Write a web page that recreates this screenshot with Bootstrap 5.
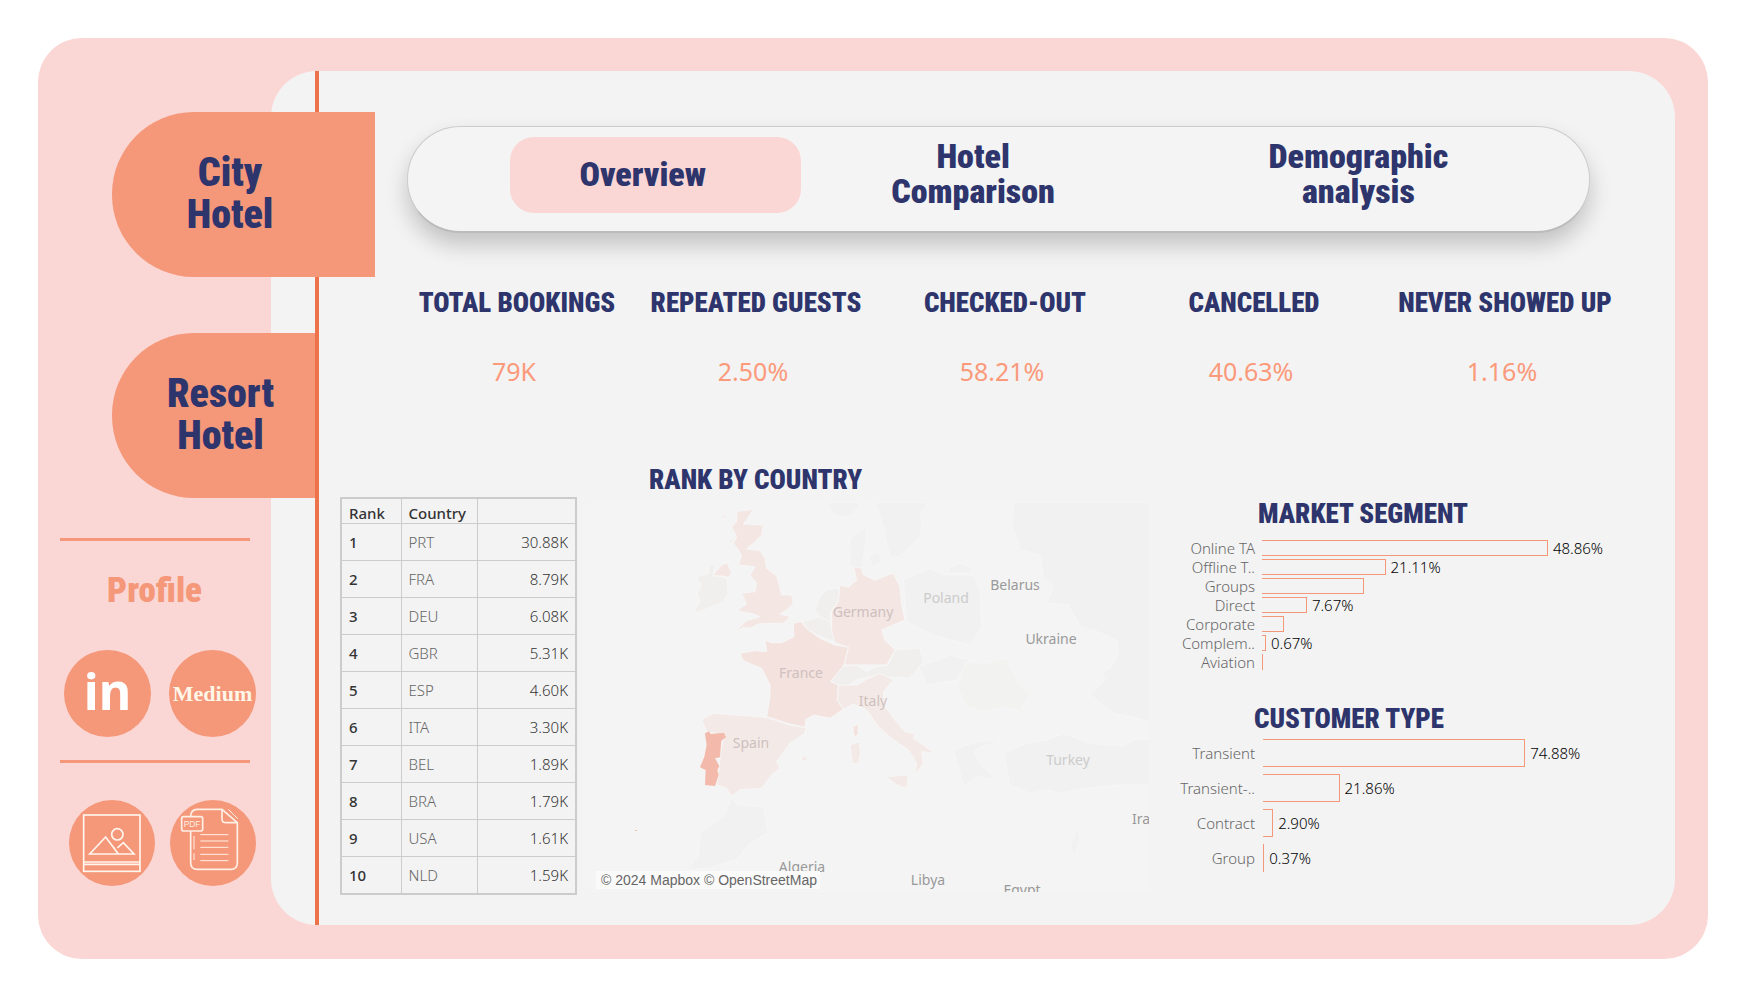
<!DOCTYPE html>
<html lang="en">
<head>
<meta charset="utf-8">
<meta name="viewport" content="width=device-width, initial-scale=1">
<title>Hotel bookings overview</title>
<link href="https://cdn.jsdelivr.net/npm/bootstrap@5.3.0/dist/css/bootstrap.min.css" rel="stylesheet">
<style>
:root{--pink:#fad7d4;--salmon:#f59779;--navy:#2e346c;--panel:#f3f3f3;--rule:#ee734a}
body{background:#fff;font-family:"Noto Sans","Open Sans",sans-serif;color:#333}
.display-face{font-family:"Roboto Condensed",Roboto,Lato,sans-serif;font-weight:900;color:var(--navy)}
.shell{background:var(--pink);border-radius:44px;margin:38px 41px 41px 38px;padding:33px 33px 34px 0}
.side{width:233px;flex:none;z-index:1;padding-top:41px}
.tab-btn{display:block;height:165px;border:0;background:var(--salmon);border-radius:82px 0 0 82px;margin-left:74px;font-size:40px;line-height:42px;padding:0 0 2px}
.tab-city{width:263px;padding-right:27px}
.tab-resort{width:203px;padding-left:14px;margin-top:56px}
.side-rule{border:0;border-top:3px solid var(--salmon);opacity:1;width:190px;margin:0 0 0 22px}
.profile-title{color:var(--salmon);font-size:35px;line-height:40px}
.disc{width:87px;height:87px;border-radius:50%;background:var(--salmon);color:#fff;text-decoration:none;flex:none}
.disc-in{font-size:50px;line-height:50px;font-weight:700;padding-bottom:6px}
.disc-medium{font:700 22px/24px "Liberation Serif",serif;color:#fff6e8}
.disc-sm{width:86px;height:86px}
.panel{background:var(--panel);border-radius:46px;min-width:0}
.rail{width:48px;flex:none;border-right:4px solid var(--rule)}
.top-nav{margin:55px 85px 0 88px;padding:10px 17px 18px 102px;border-radius:53px;display:grid;grid-template-columns:292fr 344fr 428fr;align-items:center;background:#f4f4f4;border:1px solid #ccc;border-bottom:2px solid #bbb;box-shadow:0 12px 22px rgba(0,0,0,.2)}
.top-nav button{border:0;background:none;font-size:34px;line-height:35px;height:76px;padding:0 0 2px}
.top-nav .current{background:var(--pink);border-radius:24px;padding-right:26px}
.kpis{display:grid;grid-template-columns:minmax(0,250fr) minmax(0,228fr) minmax(0,270fr) minmax(0,228fr) minmax(0,274fr);margin:54px 33px 0 73px;text-align:center}
.title-face{font-size:27px;line-height:32px;margin:0;white-space:nowrap}
.kpi-num{color:#fb9a7b;font-size:25px;line-height:32px;margin:36px 6px 0 0}
.lower{display:grid;grid-template-columns:237px minmax(0,572fr) minmax(0,481fr);margin:77px 45px 30px 21px}
.rank-table{width:237px;margin-top:33px;border-collapse:collapse;border:2px solid #ccc;font-size:15px;line-height:20px;table-layout:fixed}
.rank-table th,.rank-table td{border:1px solid #ccc;padding:0 7px;height:37px}
.rank-table thead th{height:25px;font-weight:500;padding-top:4px}
.rank-table tbody th{font-weight:500;color:#333}
.rank-table .c-name{font-weight:300;color:#666}
.rank-table .c-val{font-weight:300;text-align:right;color:#333}
.map-col{margin-left:14px}
.map-title{margin-left:58px}
.map-box{margin-top:6px}
.map-box svg{display:block;width:100%}
.map-box text{font-size:14px;text-anchor:middle;fill:#999}
.map-box .dim{fill:#ccc}
.map-box .warm{fill:#cfc0be}
.credit{position:absolute;left:5px;bottom:3px;background:#fafafa;font:14px/18px "Liberation Sans",sans-serif;color:#666;padding:0 3px 0 5px;white-space:nowrap}
.chart-title{margin-left:109px}
.bars{display:grid;font-size:15px}
.bar-line{display:grid;grid-template-columns:106px minmax(0,1fr);column-gap:7px;align-items:center}
.bar-name{text-align:right;font-weight:300;color:#666;white-space:nowrap}
.bar-plot{display:flex;align-items:center}
.bar-fill{border:1px solid var(--salmon);border-left:0;flex:none;width:calc(var(--v) * var(--unit))}
.bar-val{margin-left:5px;font-weight:300;color:#000;white-space:nowrap}
.market{--unit:1.59%;margin-top:10px;row-gap:3px}
.market .bar-line{height:16px}
.market .bar-name,.market .bar-val{line-height:16px}
.market .bar-fill{height:16px}
.customer{--unit:.954%;margin-top:4px;row-gap:7px}
.customer .bar-line,.customer .bar-fill{height:28px}
.customer .bar-line{column-gap:8px}
.customer-title{margin-top:33px;margin-left:105px}
</style>
</head>
<body>
<div class="shell d-flex">
  <aside class="side position-relative">
    <button class="tab-btn tab-city display-face" type="button">City<br>Hotel</button>
    <button class="tab-btn tab-resort display-face" type="button">Resort<br>Hotel</button>
    <hr class="side-rule" style="margin-top:40px">
    <h2 class="profile-title display-face text-center mb-0" style="margin-top:30px">Profile</h2>
    <div class="d-flex" style="margin:39px 0 0 26px;gap:18px">
      <a href="#" class="disc disc-in d-flex align-items-center justify-content-center" aria-label="LinkedIn">in</a>
      <a href="#" class="disc disc-medium d-flex align-items-center justify-content-center">Medium</a>
    </div>
    <hr class="side-rule" style="margin-top:23px">
    <div class="d-flex" style="margin:37px 0 0 31px;gap:15px">
      <a href="#" class="disc disc-sm" aria-label="Download image">
        <svg class="d-block" viewBox="0 0 258 258" width="86" height="86" fill="none" stroke="#fff6ee" stroke-width="5"><rect x="44" y="45" width="169" height="169"/><path d="M44 186h169M44 193h169M62 162l48-51 38 51zM134 142l13 20h48l-32-34-18 16M62 162h135"/><circle cx="145" cy="103" r="17"/></svg>
      </a>
      <a href="#" class="disc disc-sm" aria-label="Download PDF">
        <svg class="d-block" viewBox="0 0 258 258" width="86" height="86" fill="none" stroke="#fff0e6" stroke-width="5"><path d="M62 50q0-22 20-22h74l46 40v120q0 20-20 20H82q-20 0-20-20V94M156 28v28q0 12 12 12h34"/><rect x="35" y="50" width="63" height="43" rx="6"/><path stroke-width="3" d="M91 104h84M91 123h84M91 142h84M91 163h84M91 182h84M72 108v40M72 160v20M175 28l28 28"/><text x="66" y="80" font-size="25" text-anchor="middle" fill="#fff0e6" stroke="none" font-family="Liberation Sans">PDF</text></svg>
      </a>
    </div>
  </aside>
  <main class="panel d-flex flex-grow-1">
    <div class="rail"></div>
    <div class="flex-grow-1" style="min-width:0">
      <nav class="top-nav" aria-label="Pages">
        <button type="button" class="current display-face">Overview</button>
        <button type="button" class="display-face">Hotel<br>Comparison</button>
        <button type="button" class="display-face">Demographic<br>analysis</button>
      </nav>
      <section class="kpis">
        <div><h2 class="title-face display-face">TOTAL BOOKINGS</h2><p class="kpi-num">79K</p></div>
        <div><h2 class="title-face display-face">REPEATED GUESTS</h2><p class="kpi-num">2.50%</p></div>
        <div><h2 class="title-face display-face">CHECKED-OUT</h2><p class="kpi-num">58.21%</p></div>
        <div><h2 class="title-face display-face">CANCELLED</h2><p class="kpi-num">40.63%</p></div>
        <div><h2 class="title-face display-face">NEVER SHOWED UP</h2><p class="kpi-num">1.16%</p></div>
      </section>
      <section class="lower">
        <div>
          <table class="rank-table">
            <colgroup><col style="width:60px"><col style="width:76px"><col></colgroup>
            <thead><tr><th scope="col">Rank</th><th scope="col">Country</th><th></th></tr></thead>
            <tbody>
              <tr><th scope="row">1</th><td class="c-name">PRT</td><td class="c-val">30.88K</td></tr>
              <tr><th scope="row">2</th><td class="c-name">FRA</td><td class="c-val">8.79K</td></tr>
              <tr><th scope="row">3</th><td class="c-name">DEU</td><td class="c-val">6.08K</td></tr>
              <tr><th scope="row">4</th><td class="c-name">GBR</td><td class="c-val">5.31K</td></tr>
              <tr><th scope="row">5</th><td class="c-name">ESP</td><td class="c-val">4.60K</td></tr>
              <tr><th scope="row">6</th><td class="c-name">ITA</td><td class="c-val">3.30K</td></tr>
              <tr><th scope="row">7</th><td class="c-name">BEL</td><td class="c-val">1.89K</td></tr>
              <tr><th scope="row">8</th><td class="c-name">BRA</td><td class="c-val">1.79K</td></tr>
              <tr><th scope="row">9</th><td class="c-name">USA</td><td class="c-val">1.61K</td></tr>
              <tr><th scope="row">10</th><td class="c-name">NLD</td><td class="c-val">1.59K</td></tr>
            </tbody>
          </table>
        </div>
        <div class="map-col">
          <h2 class="title-face display-face map-title">RANK BY COUNTRY</h2>
          <div class="map-box position-relative">
            <svg viewBox="0 0 558 390" role="img" aria-label="Bookings by country">
              <rect width="558" height="390" fill="#f4f4f4"/>
              <g transform="translate(-1 -52) scale(.33333)" stroke="#f7f6f6" stroke-width="3" stroke-linejoin="round">
                <g fill="#f1f1f1">
                  <path d="M710 157H815L790 190 770 205 735 195z"/>
                  <path d="M855 157H1015L990 190 996 215 990 260 960 290 930 320 900 325 880 230z"/>
                  <path d="M780 350L778 270 800 250 830 230 828 275 825 300 815 355zM835 320l30-15 10 30-25 15z"/>
                  <path d="M1272 157H1680V815L1575 790 1540 765 1500 735 1545 690 1535 665 1560 655 1585 610 1580 570 1510 540 1470 530 1435 465 1370 460 1390 410 1360 380 1350 315 1290 300 1265 220z"/>
                  <path d="M940 390L1020 355 1060 375 1150 375 1170 420 1175 530 1140 585 1100 575 1040 560 950 515z"/>
                  <path d="M1075 352l35-12 35 10v20h-70z"/>
                  <path d="M1240 910L1310 880 1370 870 1420 850 1500 880 1600 888 1640 865 1680 870V1005L1590 1005 1490 1015 1410 1030 1370 1020 1320 1030 1260 1005z"/>
                  <path d="M1090 900L1160 875 1240 870 1170 892 1150 905 1180 950 1220 990 1160 980 1120 1010 1110 970z"/>
                  <path d="M985 650L1080 615 1140 630 1100 690 1010 705z"/>
                  <path d="M425 1045L445 1065 520 1070 535 1150 480 1180 440 1230 350 1255 290 1260 325 1220 330 1150 400 1100z"/>
                  <path d="M1455 1150l12-15 1 40-16 50-12-40z"/>
                </g>
                <g fill="#f0efee">
                  <path d="M320 380L355 372 360 345 375 345 370 375 412 385 414 430 400 455 325 488 312 480 330 455 322 430 335 410z"/>
                  <path d="M675 480L690 440 710 418 750 415 745 455 722 485 720 520 690 500z"/>
                  <path d="M635 515L690 500 720 515 735 575 690 560 655 540z"/>
                  <path d="M722 695L748 650 800 645 830 665 860 650 895 645 915 600 990 595 1000 635 960 685 880 680 835 680 800 690 770 710 745 705z"/>
                </g>
                <path fill="#f2f2f0" d="M1130 635L1180 640 1250 625 1285 700 1320 730 1290 782 1240 770 1180 785 1130 770 1100 710z"/>
                <g fill="#f3e6e3">
                  <path d="M440 185L490 178 470 210 460 222 520 225 515 255 490 280 470 297 510 302 525 325 530 355 560 378 568 405 575 435 605 435 610 460 590 480 570 492 602 500 580 520 540 520 505 522 480 535 460 532 435 548 455 525 470 512 510 500 490 492 440 482 470 462 455 430 495 425 500 400 480 375 495 350 445 345 455 318 445 300 430 280 440 260 425 230 440 215z"/>
                  <path d="M368 377L395 345 412 338 425 370 415 382 395 378zM393 207l16-20-5 18zM418 275l14-10-8 16z"/>
                  <path d="M790 350L815 355 820 375 855 390 895 375 910 370 930 410 935 465 945 510 875 540 885 570 915 600 890 645 810 645 762 645 775 592 735 578 725 545 725 485 745 455 750 405 775 412 800 390z"/>
                </g>
                <path fill="#f3e2de" d="M610 520L632 515 655 540 690 565 735 585 775 592 762 645 722 695 745 705 742 750 760 778 720 805 672 795 648 808 645 832 600 822 530 800 540 740 540 705 515 655 490 645 460 632 450 610 495 602 530 605 525 570 545 578 575 578 612 560z"/>
                <g fill="#f3eae7">
                  <path d="M335 808L370 790 440 795 530 802 600 825 648 833 645 850 600 880 560 935 570 955 545 975 515 1015 450 1020 425 1038 410 1015 380 1005 385 975 390 925 395 885 405 855 350 845zM632 925l12-8 9 12-8 6z"/>
                  <path d="M745 705L800 705 835 685 870 670 910 690 880 725 885 770 915 810 945 845 975 852 970 865 1035 910 995 905 1000 940 975 978 980 940 955 900 905 865 865 830 830 780 790 762 760 778 742 750zM888 980L955 975 950 1015 920 1005zM780 885L808 875 812 910 805 940 787 942z"/>
                </g>
                <path fill="#f3e2de" d="M789 830l16-8v28l-8 13-7-13z"/>
                <path fill="#f3baab" stroke="none" d="M345 850L357 844 362 852 385 850 402 849 408 862 394 872 392 895 390 922 375 925 388 948 382 960 386 975 375 1008 345 1005 347 960 330 952 343 920 350 885zM135 1140h6v3h-6z"/>
              </g>
              <text x="424" y="88">Belarus</text>
              <text x="460" y="142">Ukraine</text>
              <text x="355" y="101" class="dim">Poland</text>
              <text x="272" y="115" class="warm">Germany</text>
              <text x="210" y="176" class="warm">France</text>
              <text x="282" y="204" class="warm">Italy</text>
              <text x="160" y="246" class="warm">Spain</text>
              <text x="477" y="263" class="dim">Turkey</text>
              <text x="550" y="322">Ira</text>
              <text x="211" y="370">Algeria</text>
              <text x="337" y="383">Libya</text>
              <text x="431" y="393">Egypt</text>
            </svg>
            <div class="credit">© 2024 Mapbox © OpenStreetMap</div>
          </div>
        </div>
        <div style="padding-top:34px">
          <h2 class="title-face display-face chart-title">MARKET SEGMENT</h2>
          <div class="bars market">
            <div class="bar-line"><span class="bar-name">Online TA</span><div class="bar-plot"><div class="bar-fill" style="--v:48.86"></div><span class="bar-val">48.86%</span></div></div>
            <div class="bar-line"><span class="bar-name">Offline T..</span><div class="bar-plot"><div class="bar-fill" style="--v:21.11"></div><span class="bar-val">21.11%</span></div></div>
            <div class="bar-line"><span class="bar-name">Groups</span><div class="bar-plot"><div class="bar-fill" style="--v:17.5"></div></div></div>
            <div class="bar-line"><span class="bar-name">Direct</span><div class="bar-plot"><div class="bar-fill" style="--v:7.67"></div><span class="bar-val">7.67%</span></div></div>
            <div class="bar-line"><span class="bar-name">Corporate</span><div class="bar-plot"><div class="bar-fill" style="--v:3.76"></div></div></div>
            <div class="bar-line"><span class="bar-name">Complem..</span><div class="bar-plot"><div class="bar-fill" style="--v:.67"></div><span class="bar-val">0.67%</span></div></div>
            <div class="bar-line"><span class="bar-name">Aviation</span><div class="bar-plot"><div class="bar-fill" style="--v:.1"></div></div></div>
          </div>
          <h2 class="title-face display-face customer-title">CUSTOMER TYPE</h2>
          <div class="bars customer">
            <div class="bar-line"><span class="bar-name">Transient</span><div class="bar-plot"><div class="bar-fill" style="--v:74.88"></div><span class="bar-val">74.88%</span></div></div>
            <div class="bar-line"><span class="bar-name">Transient-..</span><div class="bar-plot"><div class="bar-fill" style="--v:21.86"></div><span class="bar-val">21.86%</span></div></div>
            <div class="bar-line"><span class="bar-name">Contract</span><div class="bar-plot"><div class="bar-fill" style="--v:2.9"></div><span class="bar-val">2.90%</span></div></div>
            <div class="bar-line"><span class="bar-name">Group</span><div class="bar-plot"><div class="bar-fill" style="--v:.37"></div><span class="bar-val">0.37%</span></div></div>
          </div>
        </div>
      </section>
    </div>
  </main>
</div>
<script src="https://cdn.jsdelivr.net/npm/bootstrap@5.3.0/dist/js/bootstrap.bundle.min.js"></script>
</body>
</html>
